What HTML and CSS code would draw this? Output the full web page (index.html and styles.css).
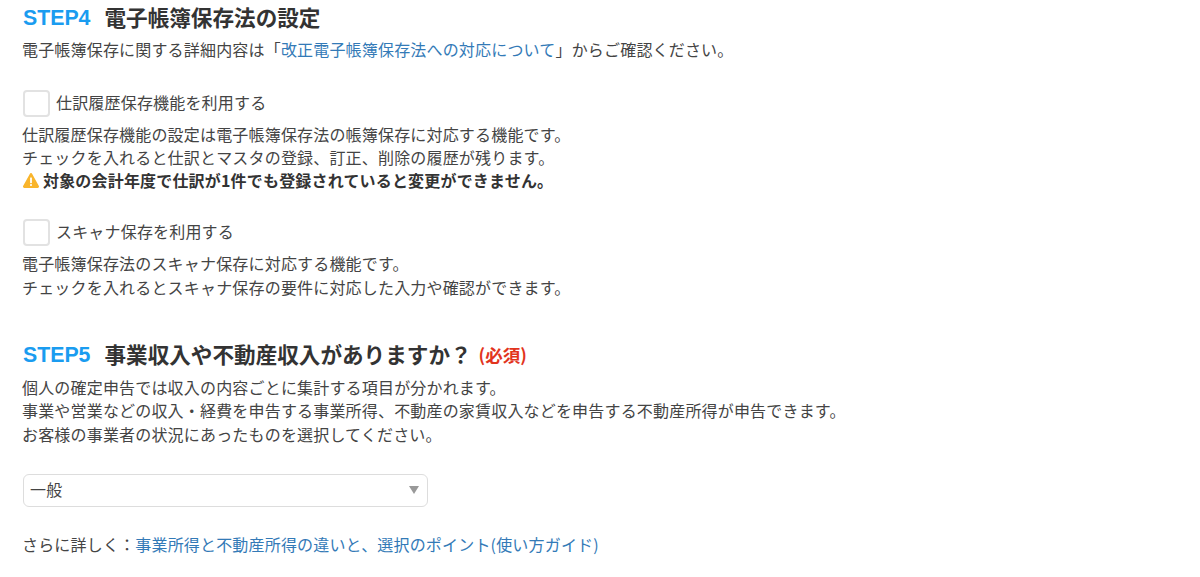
FILE: index.html
```html
<!DOCTYPE html>
<html lang="ja">
<head>
<meta charset="utf-8">
<title>設定</title>
<link rel="stylesheet" href="styles.css">
</head>
<body>
<section class="step step4">
  <h2 class="heading"><span class="num">STEP4</span><span class="ttl">電子帳簿保存法の設定</span></h2>
  <p class="txt">電子帳簿保存に関する詳細内容は「<a href="#">改正電子帳簿保存法への対応について</a>」からご確認ください。</p>
  <label class="check first"><span class="box"></span><span class="lbl">仕訳履歴保存機能を利用する</span></label>
  <p class="txt">仕訳履歴保存機能の設定は電子帳簿保存法の帳簿保存に対応する機能です。<br>チェックを入れると仕訳とマスタの登録、訂正、削除の履歴が残ります。</p>
  <p class="txt warn"><svg class="warn-icon" viewBox="0.8 1.5 14.4 13.3" width="16" height="15"><path d="M8 1.500c.5 0 .9.3 1.100.7l6 11c.4.8-.1 1.600-1 1.600H1.900c-.9 0-1.400-.8-1-1.600l6-11C7.100 1.800 7.500 1.500 8 1.500z" fill="#f9b52c"/><rect x="7.200" y="5.500" width="1.600" height="5" fill="#fff"/><rect x="7.200" y="11.400" width="1.600" height="1.600" fill="#fff"/></svg><b>対象の会計年度で仕訳が1件でも登録されていると変更ができません。</b></p>
  <label class="check second"><span class="box"></span><span class="lbl">スキャナ保存を利用する</span></label>
  <p class="txt">電子帳簿保存法のスキャナ保存に対応する機能です。<br>チェックを入れるとスキャナ保存の要件に対応した入力や確認ができます。</p>
</section>
<section class="step step5">
  <h2 class="heading"><span class="num">STEP5</span><span class="ttl">事業収入や不動産収入がありますか？</span><span class="req">(必須)</span></h2>
  <p class="txt">個人の確定申告では収入の内容ごとに集計する項目が分かれます。<br>事業や営業などの収入・経費を申告する事業所得、不動産の家賃収入などを申告する不動産所得が申告できます。<br>お客様の事業者の状況にあったものを選択してください。</p>
  <div class="select"><span>一般</span><svg class="caret" viewBox="0 0 10 8" width="10" height="8"><path d="M0 0h10L5 8z" fill="#999"/></svg></div>
  <p class="txt more">さらに詳しく：<a href="#">事業所得と不動産所得の違いと、選択のポイント(使い方ガイド)</a></p>
</section>
</body>
</html>
```
FILE: styles.css
```css
* { box-sizing: border-box; }
html, body { margin: 0; padding: 0; }
body {
  width: 1200px;
  height: 577px;
  overflow: hidden;
  background: #fff;
  color: #444;
  font-family: "Noto Sans CJK JP", "Liberation Sans", sans-serif;
  font-size: 16px;
  letter-spacing: 0.18px;
  line-height: 23.5px;
  padding: 0 22px;
}
.heading {
  margin: 0 0 2px;
  display: flex;
  align-items: center;
  height: 36px;
  font-size: 21.6px;
  font-weight: 700;
  line-height: 36px;
  letter-spacing: 0;
}
.num { color: #1a9cf0; font-family: "Liberation Sans", sans-serif; font-size: 21.3px; margin-right: 14px; margin-left: 1px; }
.ttl { color: #333; margin-top: -3px; }
.req { color: #e2341d; font-size: 17.5px; margin-left: 7px; }
.txt { margin: 0; }
.step5 .heading { margin-bottom: 3px; }
.step5 .ttl { margin-top: -1px; }
a { color: #337ab7; text-decoration: none; }
.check { display: flex; align-items: center; height: 27px; gap: 6px; margin-left: 1px; }
.check.first { margin-top: 28px; margin-bottom: 6px; }
.check.second { margin-top: 27px; margin-bottom: 6px; }
.lbl { margin-top: -1px; }
.box {
  width: 27px; height: 27px;
  border: 2px solid #e2e2e2;
  border-radius: 4px;
  background: #fff;
}
.warn { display: flex; align-items: center; gap: 4px; margin: -1px 0 0 1px; }
.warn b { font-weight: 700; color: #333; }
.warn-icon { flex: none; }
.step5 { margin-top: 37.5px; }
.select {
  margin: 27.5px 0 0 1px;
  width: 405px; height: 33px;
  border: 1px solid #ddd;
  border-radius: 6px;
  padding: 0 8px 0 6px;
  display: flex; align-items: center; justify-content: space-between;
  background: #fff;
}
.more { margin-top: 26px; margin-left: 0; }
```
